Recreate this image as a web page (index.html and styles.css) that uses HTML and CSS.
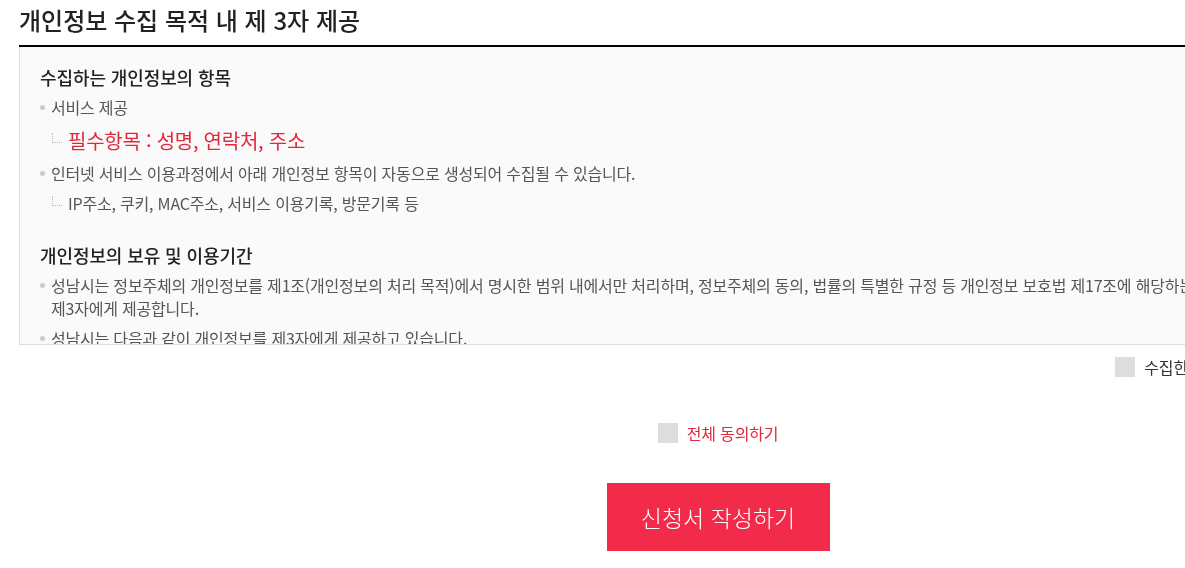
FILE: index.html
```html
<!DOCTYPE html>
<html lang="ko">
<head>
    <meta charset="UTF-8">
    <meta name="viewport" content="width=device-width, initial-scale=1.0">
    <title>개인정보 제3자 제공</title>
    <link rel="stylesheet" href="styles.css">
</head>
<body>

<div class="wrap">
    <h2 class="section-title">개인정보 수집 목적 내 제 3자 제공</h2>

    <div class="terms-box">
        <h3 class="terms-head">수집하는 개인정보의 항목</h3>
        <ul class="dot-list">
            <li>서비스 제공
                <ul class="tree-list">
                    <li class="required">필수항목 : 성명, 연락처, 주소</li>
                </ul>
            </li>
            <li>인터넷 서비스 이용과정에서 아래 개인정보 항목이 자동으로 생성되어 수집될 수 있습니다.
                <ul class="tree-list">
                    <li>IP주소, 쿠키, MAC주소, 서비스 이용기록, 방문기록 등</li>
                </ul>
            </li>
        </ul>

        <h3 class="terms-head">개인정보의 보유 및 이용기간</h3>
        <ul class="dot-list">
            <li>성남시는 정보주체의 개인정보를 제1조(개인정보의 처리 목적)에서 명시한 범위 내에서만 처리하며, 정보주체의 동의, 법률의 특별한 규정 등 개인정보 보호법 제17조에 해당하는 경우에만 개인정보를 제3자에게 제공합니다.</li>
            <li>성남시는 다음과 같이 개인정보를 제3자에게 제공하고 있습니다.</li>
            <li>제공받는 자 : 성남시 관련 부서 및 위탁기관</li>
            <li>제공 목적 : 신청서 접수 및 처리, 결과 안내</li>
        </ul>
    </div>

    <div class="agree-row">
        <label class="check">
            <input type="checkbox">
            <span class="box"></span>
            <span>수집한 개인정보 제3자 제공에 동의합니다</span>
        </label>
    </div>

    <div class="agree-all">
        <label class="check check-red">
            <input type="checkbox">
            <span class="box"></span>
            <span>전체 동의하기</span>
        </label>
    </div>

    <div class="btn-area">
        <button type="button" class="btn-submit">신청서 작성하기</button>
    </div>
</div>

</body>
</html>
```

FILE: styles.css
```css
html {
    overflow-x: hidden;
}
body {
    margin: 0;
    padding: 0;
    background-color: #fff;
    font-family: "Noto Sans CJK KR", "Noto Sans", sans-serif;
    color: #333;
}
.wrap {
    width: 1398px;
    margin-left: 19px;
}
.section-title {
    margin: 0;
    padding-bottom: 5px;
    font-size: 24px;
    line-height: 40px;
    font-weight: 500;
    color: #222;
    border-bottom: 2px solid #000;
}
.terms-box {
    box-sizing: border-box;
    height: 298px;
    overflow-y: auto;
    padding: 18px 20px;
    background-color: #fafafa;
    border: 1px solid #ddd;
    border-top: 0;
    letter-spacing: -0.2px;
    word-break: keep-all;
}
.terms-head {
    margin: 0 0 7px;
    font-size: 18px;
    line-height: 24px;
    font-weight: 500;
    color: #222;
    letter-spacing: -0.1px;
}
.dot-list {
    margin: 0 0 28px;
    padding: 0;
    list-style: none;
}
.dot-list > li {
    position: relative;
    margin-top: 7px;
    padding-left: 11px;
    font-size: 16px;
    line-height: 23px;
    color: #555;
}
.dot-list > li:first-child {
    margin-top: 0;
}
.dot-list > li::before {
    content: "";
    position: absolute;
    left: 0;
    top: 9px;
    width: 5px;
    height: 5px;
    border-radius: 50%;
    background-color: #ccc;
}
.tree-list {
    margin: 7px 0 0;
    padding: 0 0 0 1px;
    list-style: none;
}
.tree-list > li {
    display: flex;
    align-items: center;
    gap: 6px;
    font-size: 16px;
    line-height: 23px;
    color: #555;
}
.tree-list > li::before {
    content: "";
    flex: none;
    width: 9px;
    height: 9px;
    margin-top: -6px;
    border-left: 1px dotted #bbb;
    border-bottom: 1px dotted #bbb;
}
.tree-list > li.required {
    font-size: 20px;
    line-height: 29px;
    letter-spacing: -0.25px;
    color: #e3283a;
}
.agree-row {
    display: flex;
    justify-content: flex-end;
    margin-top: 12px;
}
.agree-all {
    display: flex;
    justify-content: center;
    margin-top: 46px;
}
.check {
    display: flex;
    align-items: center;
    gap: 9px;
    font-size: 16px;
    line-height: 20px;
    letter-spacing: -0.2px;
    color: #333;
    cursor: pointer;
}
.check input {
    display: none;
}
.check .box {
    width: 20px;
    height: 20px;
    background-color: #ddd;
}
.check-red {
    color: #e3283a;
}
.btn-area {
    display: flex;
    justify-content: center;
    margin-top: 40px;
}
.btn-submit {
    width: 223px;
    height: 68px;
    border: none;
    background-color: #f32b4a;
    color: #fff;
    font-family: inherit;
    font-size: 23px;
    font-weight: 300;
    cursor: pointer;
}
```
